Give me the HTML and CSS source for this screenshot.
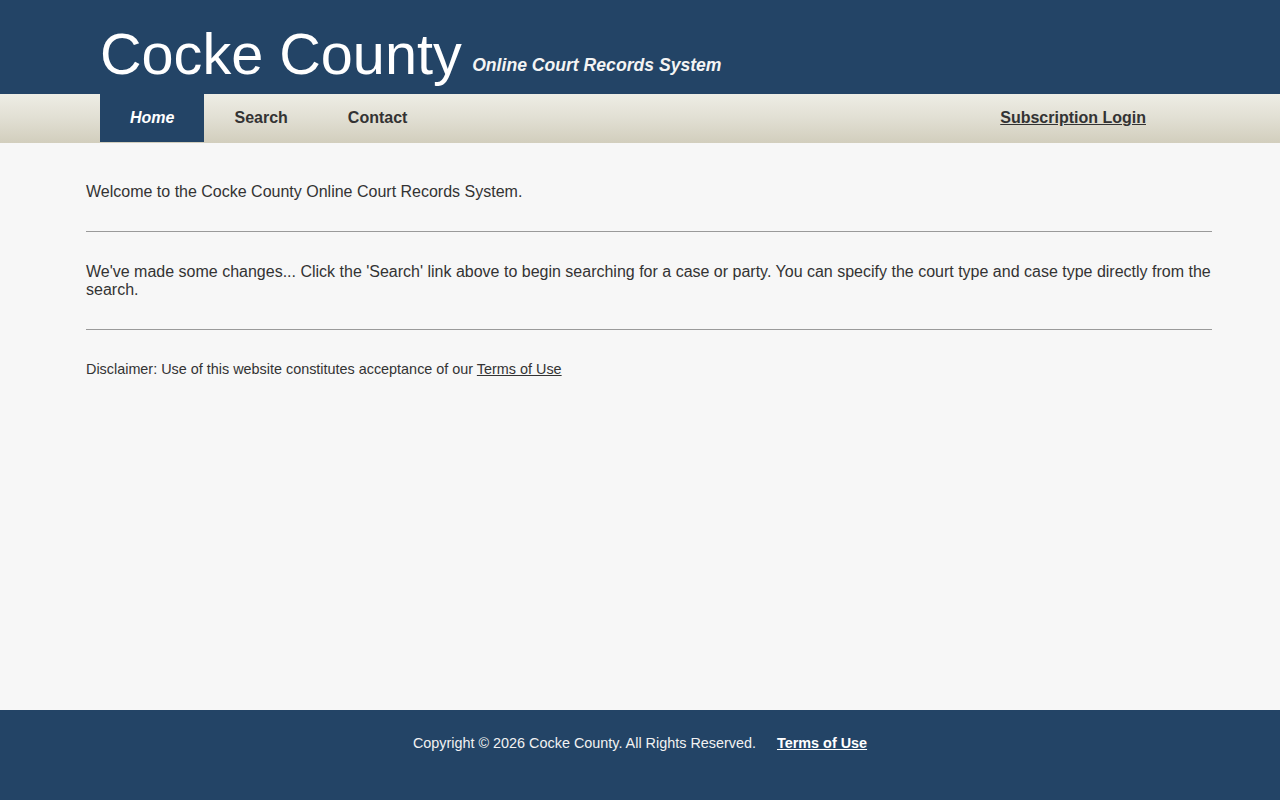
FILE: index.html
```html
<!DOCTYPE html>
<html lang="en">
<head>
<meta charset="utf-8">
<title>Cocke County Online Court Records System</title>
<link rel="stylesheet" href="styles.css">
</head>
<body>
<div class="page">
  <header class="masthead">
    <div class="brand">
      <span class="brand-title">Cocke County</span>
      <span class="brand-sub">Online Court Records System</span>
    </div>
  </header>
  <nav class="navbar">
    <ul class="nav-left">
      <li><a class="nav-link active" href="#">Home</a></li>
      <li><a class="nav-link" href="#">Search</a></li>
      <li><a class="nav-link" href="#">Contact</a></li>
    </ul>
    <a class="nav-link login" href="#">Subscription Login</a>
  </nav>
  <main class="content">
    <p class="text">Welcome to the Cocke County Online Court Records System.</p>
    <hr class="rule">
    <p class="text">We've made some changes... Click the 'Search' link above to begin searching for a case or party. You can specify the court type and case type directly from the search.</p>
    <hr class="rule">
    <p class="disclaimer">Disclaimer: Use of this website constitutes acceptance of our <a href="#" class="terms">Terms of Use</a></p>
  </main>
  <footer class="footer">
    <span>Copyright © 2026 Cocke County. All Rights Reserved.</span>
    <a href="#" class="footer-link">Terms of Use</a>
  </footer>
</div>
</body>
</html>
```
FILE: styles.css
```css
* { box-sizing: border-box; }
html, body { margin: 0; padding: 0; }
body {
  font-family: "Liberation Sans", Arial, sans-serif;
  background: #f7f7f7;
  color: #333;
}
.page {
  min-height: 100vh;
  display: flex;
  flex-direction: column;
}
.masthead {
  background: #234466;
  height: 94px;
  padding: 21px 0 0 100px;
}
.brand { white-space: nowrap; }
.brand-title {
  font-size: 57.6px;
  color: #fff;
  line-height: normal;
}
.brand-sub {
  font-size: 17.6px;
  font-weight: bold;
  font-style: italic;
  color: #f4f4f4;
  margin-left: 6px;
  vertical-align: 3px;
}
.navbar {
  height: 49px;
  background: linear-gradient(to bottom, #eeede5 0%, #e1dfd3 50%, #d2cebd 100%);
  display: flex;
  justify-content: space-between;
  align-items: stretch;
  padding: 0 104px 0 100px;
}
.nav-left {
  list-style: none;
  margin: 0;
  padding: 0;
  display: flex;
}
.nav-link {
  display: block;
  padding: 0 30px 1px;
  line-height: 47px;
  font-size: 16px;
  font-weight: bold;
  color: #333;
  text-decoration: none;
}
.nav-link.active {
  background: #234466;
  color: #fff;
  font-style: italic;
}
.nav-link.login {
  text-decoration: underline;
}
.content {
  flex: 1;
  padding: 40px 68px 0 86px;
}
.text {
  margin: 0;
  font-size: 16px;
  line-height: 18px;
}
.rule {
  border: 0;
  border-top: 1px solid #9a9a9a;
  margin: 30px 0 31px;
  height: 0;
}
.disclaimer {
  margin: 0;
  font-size: 14.4px;
  line-height: 17px;
}
.terms { color: #333; }
.footer {
  background: #234466;
  height: 90px;
  padding-top: 25px;
  text-align: center;
  font-size: 14.4px;
  line-height: 17px;
  color: #f2f2f2;
}
.footer-link {
  color: #fff;
  font-weight: bold;
  margin-left: 17px;
}
```
